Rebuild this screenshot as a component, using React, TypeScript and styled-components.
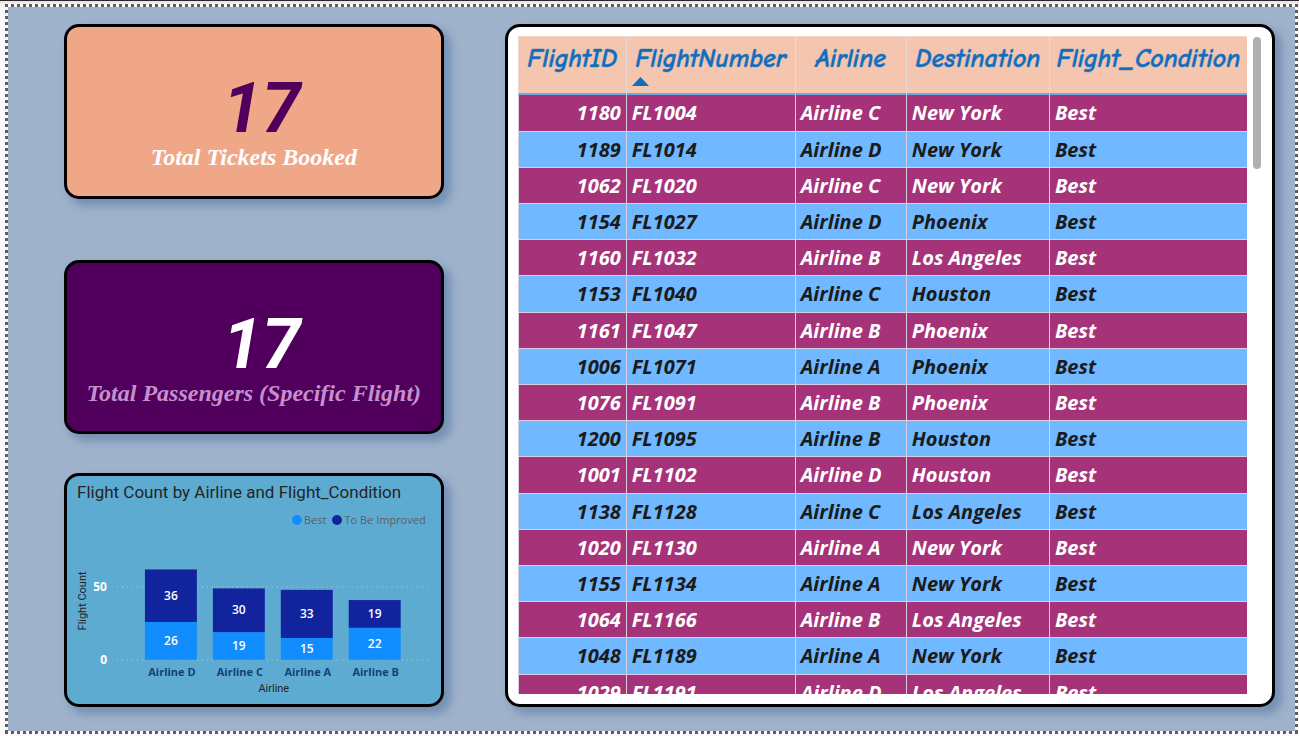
import React from "react";
import styled, { createGlobalStyle, css } from "styled-components";

const DASH = "#605e5c";

const GlobalStyle = createGlobalStyle`
  *, *::before, *::after { box-sizing: border-box; }
  html, body, #root { height: 100%; }
  body {
    margin: 0;
    background: #fbfafb;
    font-family: "Segoe UI", "Noto Sans", sans-serif;
  }
`;

const Page = styled.main`
  height: 100%;
  min-height: 640px;
  display: flex;
  padding: 3px 1px 2px 5px;
  border-top: 1px solid #2b2529;
  background: linear-gradient(#ebe4ea, #fbfafb 8px);
`;

const Canvas = styled.div`
  flex: 1;
  min-width: 0;
  display: grid;
  grid-template-columns: 380fr 771fr;
  column-gap: 61px;
  padding: 20px 23px 27px 59px;
  background:
    repeating-linear-gradient(90deg, ${DASH} 0 3px, #fbfafb 3px 6px) top / 100% 3px no-repeat,
    repeating-linear-gradient(90deg, ${DASH} 0 3px, #fbfafb 3px 6px) bottom / 100% 3px no-repeat,
    repeating-linear-gradient(180deg, ${DASH} 0 3px, #fbfafb 3px 6px) left / 3px 100% no-repeat,
    repeating-linear-gradient(180deg, ${DASH} 0 3px, #fbfafb 3px 6px) right / 3px 100% no-repeat,
    #9fb2cb;
`;

const Column = styled.div`
  display: grid;
  grid-template-rows: minmax(0, 236fr) minmax(0, 213fr) minmax(0, 234fr);
  min-height: 0;
`;

const panel = css`
  border: 3px solid #000;
  border-radius: 15px;
  box-shadow: 6px 6px 9px 1px #7490b4;
  min-height: 0;
`;

const StatCard = styled.section<{ $bg: string; $gap: number }>`
  ${panel}
  margin-bottom: ${(p) => p.$gap}px;
  padding-top: 31px;
  background: ${(p) => p.$bg};
  display: flex;
  flex-direction: column;
  align-items: center;
  justify-content: center;
`;

const StatValue = styled.strong<{ $color: string }>`
  padding-left: 16px;
  color: ${(p) => p.$color};
  font: italic 700 70px/60px "DIN", Roboto, sans-serif;
`;

const StatLabel = styled.span<{ $color: string }>`
  color: ${(p) => p.$color};
  font: italic 700 24px/38px "Liberation Serif", serif;
  white-space: nowrap;
`;

const ChartCard = styled.section`
  ${panel}
  padding: 5px 10px 0;
  background: #5eabd2;
  display: flex;
  flex-direction: column;
`;

const ChartTitle = styled.h2`
  margin: 0;
  color: #252423;
  font: 400 17px/22px "DIN", Roboto, sans-serif;
  white-space: nowrap;
`;

const Legend = styled.ul`
  display: flex;
  justify-content: flex-end;
  gap: 6px;
  margin: 9px 5px 5px 0;
  padding: 0;
  list-style: none;
`;

const LegendItem = styled.li<{ $color: string }>`
  display: flex;
  align-items: center;
  gap: 2px;
  color: #605e5c;
  font: 400 11px/16px "Open Sans", sans-serif;
  &::before {
    content: "";
    width: 10px;
    height: 10px;
    border-radius: 50%;
    background: ${(p) => p.$color};
  }
`;

const Plot = styled.svg`
  display: block;
  width: 100%;
  flex: 1;
  min-height: 0;
  overflow: visible;
  text-anchor: middle;
  font-family: "Open Sans", sans-serif;
`;

const AxisTitle = styled.text`
  fill: #252423;
  font: 400 11px Roboto, sans-serif;
`;
const Tick = styled.text`
  fill: #fff;
  font-size: 12px;
  font-weight: 700;
  text-anchor: end;
`;
const Category = styled.text`
  fill: #12407a;
  font-size: 11px;
  font-weight: 700;
`;
const BarValue = styled.text`
  fill: #fff;
  font-size: 12px;
  font-weight: 600;
`;

const TableCard = styled.section`
  ${panel}
  display: flex;
  gap: 6px;
  padding: 9px 11px 10px 10px;
  background: #fff;
`;

const TableClip = styled.div`
  flex: 1;
  min-width: 0;
  overflow: hidden;
`;

const Thumb = styled.div`
  flex: none;
  width: 8px;
  height: 20%;
  margin-top: 1px;
  border-radius: 4px;
  background: #b1b0af;
`;

const Table = styled.table`
  width: 100%;
  table-layout: fixed;
  border-collapse: separate;
  border-spacing: 0;
`;

const HeadCell = styled.th`
  height: 59px;
  padding: 8px 0 0;
  vertical-align: top;
  background: #f4c5af;
  border-top: 1px solid #f6d6c8;
  border-left: 1px solid #e9d8d3;
  border-bottom: 2px solid #70a9e2;
`;

const SortButton = styled.button`
  display: block;
  width: 100%;
  padding: 0;
  border: 0;
  background: none;
  color: #106ebe;
  font: italic 700 26px/28px "Comic Sans MS", "Comic Neue", "Open Sans", sans-serif;
  -webkit-text-stroke: 1px #106ebe66;
  text-align: center;
  white-space: nowrap;
`;

const SortArrow = styled.svg`
  display: block;
  width: 17px;
  height: 9px;
  margin: 4px 0 0 5px;
`;

const Row = styled.tr`
  height: 36px;
  background: #70b8ff;
  color: #1b1b1b;
  &:nth-child(odd) {
    background: #a6337a;
    color: #fff;
  }
  &:nth-child(5n + 1) {
    height: 37px;
  }
`;

const Cell = styled.td<{ $right?: boolean }>`
  padding: 0 5px;
  border-left: 1px solid #d9cfe0;
  border-bottom: 1px solid #d9cfe0;
  font: italic 700 20px/28px "Open Sans", sans-serif;
  text-align: ${(p) => (p.$right ? "right" : "left")};
  white-space: nowrap;
`;

const COLUMNS = [
  { name: "FlightID", width: 108 },
  { name: "FlightNumber", width: 169 },
  { name: "Airline", width: 111 },
  { name: "Destination", width: 143 },
  { name: "Flight_Condition", width: 198 },
];
const TOTAL_WIDTH = 729;

const FLIGHTS: [number, string, string, string][] = [
  [1180, "FL1004", "Airline C", "New York"],
  [1189, "FL1014", "Airline D", "New York"],
  [1062, "FL1020", "Airline C", "New York"],
  [1154, "FL1027", "Airline D", "Phoenix"],
  [1160, "FL1032", "Airline B", "Los Angeles"],
  [1153, "FL1040", "Airline C", "Houston"],
  [1161, "FL1047", "Airline B", "Phoenix"],
  [1006, "FL1071", "Airline A", "Phoenix"],
  [1076, "FL1091", "Airline B", "Phoenix"],
  [1200, "FL1095", "Airline B", "Houston"],
  [1001, "FL1102", "Airline D", "Houston"],
  [1138, "FL1128", "Airline C", "Los Angeles"],
  [1020, "FL1130", "Airline A", "New York"],
  [1155, "FL1134", "Airline A", "New York"],
  [1064, "FL1166", "Airline B", "Los Angeles"],
  [1048, "FL1189", "Airline A", "New York"],
  [1029, "FL1191", "Airline D", "Los Angeles"],
];

const BARS = [
  { airline: "Airline D", best: 26, improve: 36 },
  { airline: "Airline C", best: 19, improve: 30 },
  { airline: "Airline A", best: 15, improve: 33 },
  { airline: "Airline B", best: 22, improve: 19 },
];

const UNIT = 1.46;
const BASE = 127;

function FlightChart() {
  return (
    <Plot
      viewBox="0 0 354 166"
      preserveAspectRatio="xMidYMin meet"
      role="img"
      aria-label="Flight Count by Airline"
    >
      {[0, 50].map((v) => (
        <g key={v}>
          <line
            x1={40}
            x2={353}
            y1={BASE - v * UNIT}
            y2={BASE - v * UNIT}
            stroke="#c8c6c4"
            strokeDasharray="1 4"
          />
          <Tick x={30} y={BASE - v * UNIT + 4}>{v}</Tick>
        </g>
      ))}
      {BARS.map((b, i) => {
        const x = 68 + i * 68;
        const bestH = b.best * UNIT;
        const improveH = b.improve * UNIT;
        return (
          <g key={b.airline}>
            <rect x={x} y={BASE - bestH} width={52} height={bestH} fill="#118dff" />
            <rect x={x} y={BASE - bestH - improveH} width={52} height={improveH} fill="#12239e" />
            <BarValue x={x + 26} y={BASE - bestH / 2 + 4}>{b.best}</BarValue>
            <BarValue x={x + 26} y={BASE - bestH - improveH / 2 + 4}>{b.improve}</BarValue>
            <Category x={x + 27} y={BASE + 16}>{b.airline}</Category>
          </g>
        );
      })}
      <AxisTitle x={197} y={BASE + 32}>Airline</AxisTitle>
      <AxisTitle transform="translate(9 68) rotate(-90)">Flight Count</AxisTitle>
    </Plot>
  );
}

export default function App() {
  return (
    <>
      <GlobalStyle />
      <Page>
        <Canvas>
          <Column>
            <StatCard $bg="#f0a788" $gap={61}>
              <StatValue $color="#50005c">17</StatValue>
              <StatLabel $color="#fff">Total Tickets Booked</StatLabel>
            </StatCard>
            <StatCard $bg="#50005c" $gap={39}>
              <StatValue $color="#fff">17</StatValue>
              <StatLabel $color="#c490cd">Total Passengers (Specific Flight)</StatLabel>
            </StatCard>
            <ChartCard>
              <ChartTitle>Flight Count by Airline and Flight_Condition</ChartTitle>
              <Legend>
                <LegendItem $color="#118dff">Best</LegendItem>
                <LegendItem $color="#12239e">To Be Improved</LegendItem>
              </Legend>
              <FlightChart />
            </ChartCard>
          </Column>
          <TableCard>
            <TableClip>
              <Table>
                <colgroup>
                  {COLUMNS.map((c) => (
                    <col key={c.name} style={{ width: `${(c.width / TOTAL_WIDTH) * 100}%` }} />
                  ))}
                </colgroup>
                <thead>
                  <tr>
                    {COLUMNS.map((c) => (
                      <HeadCell key={c.name} scope="col">
                        <SortButton type="button">{c.name}</SortButton>
                        {c.name === "FlightNumber" && (
                          <SortArrow viewBox="0 0 17 9" aria-hidden="true">
                            <path d="M0 9 8.500 0 17 9Z" fill="#106ebe" />
                          </SortArrow>
                        )}
                      </HeadCell>
                    ))}
                  </tr>
                </thead>
                <tbody>
                  {FLIGHTS.map(([id, number, airline, destination]) => (
                    <Row key={id}>
                      <Cell $right>{id}</Cell>
                      <Cell>{number}</Cell>
                      <Cell>{airline}</Cell>
                      <Cell>{destination}</Cell>
                      <Cell>Best</Cell>
                    </Row>
                  ))}
                </tbody>
              </Table>
            </TableClip>
            <Thumb />
          </TableCard>
        </Canvas>
      </Page>
    </>
  );
}
